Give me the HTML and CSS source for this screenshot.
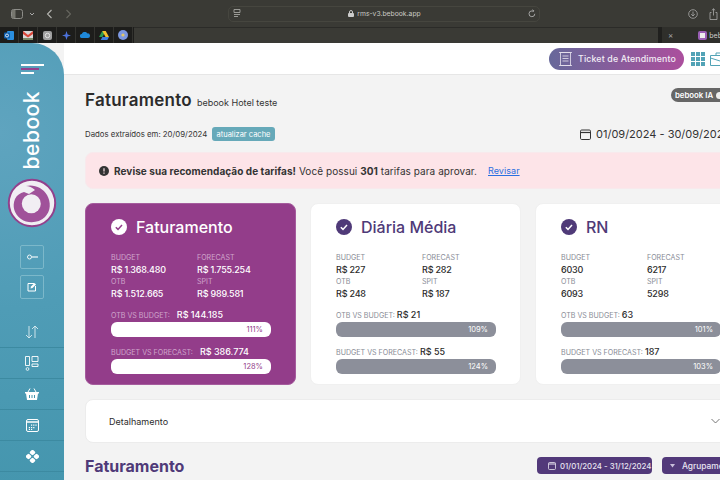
FILE: index.html
```html
<!DOCTYPE html>
<html lang="pt-BR">
  <head>
    <meta charset="UTF-8" />
    <title>bebook RMS</title>
    <link rel="stylesheet" href="styles.css">
  </head>
  <body>
    <!-- browser chrome -->
    <div class="toolbar">
      <div class="toolbar-left">
        <svg class="tool-icon" width="12" height="10" viewBox="0 0 12 10"><rect x=".5" y=".5" width="11" height="9" rx="2" fill="none" stroke="#8d8d88"/><rect x="1" y="1" width="3.5" height="8" fill="#77776f"/></svg>
        <svg width="6" height="4" viewBox="0 0 6 4"><path d="M1 1l2 2 2-2" fill="none" stroke="#aaa" stroke-width="1"/></svg>
        <svg class="nav-back" width="7" height="10" viewBox="0 0 7 10"><path d="M5.5 1L1.5 5l4 4" fill="none" stroke="#b5b5b0" stroke-width="1.1"/></svg>
        <svg class="nav-forward" width="7" height="10" viewBox="0 0 7 10"><path d="M1.5 1l4 4-4 4" fill="none" stroke="#66665f" stroke-width="1.1"/></svg>
      </div>
      <div class="address">
        <svg class="address-list" width="8" height="9" viewBox="0 0 8 9"><path d="M1 .5h6v3H1zM1 5.500h6M1 7.500h4" fill="none" stroke="#a5a5a0" stroke-width=".9"/></svg>
        <div class="address-url">
          <svg width="6" height="7" viewBox="0 0 6 7"><rect y="3" width="6" height="4" rx="1" fill="#ccc"/><path d="M1.500 3V2a1.500 1.500 0 013 0v1" fill="none" stroke="#ccc"/></svg>
          <span>rms-v3.bebook.app</span>
        </div>
        <svg class="address-reload" width="8" height="9" viewBox="0 0 8 9"><path d="M6.800 4.800A2.900 2.900 0 114 1.900h1.500M4.600.6l1.200 1.300-1.200 1.200" fill="none" stroke="#bbb" stroke-width=".8"/></svg>
      </div>
      <div class="toolbar-right">
        <svg width="10" height="10" viewBox="0 0 10 10"><circle cx="5" cy="5" r="4.300" fill="none" stroke="#aaa" stroke-width=".8"/><path d="M5 2.500v4.500M3.200 5.200L5 7l1.800-1.800" fill="none" stroke="#aaa" stroke-width=".8"/></svg>
        <svg width="9" height="12" viewBox="0 0 9 12"><path d="M2.500 4.500H1v7h7v-7H6.500M4.500 7.500V.8M2.800 2.400L4.500.8l1.700 1.600" fill="none" stroke="#aaa" stroke-width=".8"/></svg>
      </div>
    </div>
    <div class="tabs">
      <div class="pinned">
        <span class="pin">
          <svg width="10" height="9" viewBox="0 0 10 9"><rect x="3" width="7" height="9" rx="1" fill="#2a8fe0"/><rect y="1.500" width="6" height="6" rx="1" fill="#0f5fae"/><circle cx="3" cy="4.500" r="1.500" fill="none" stroke="#fff" stroke-width=".8"/></svg>
        </span>
        <span class="pin">
          <svg width="10" height="9" viewBox="0 0 10 9"><rect width="10" height="9" fill="#d8d8d8"/><path d="M0 0l5 4 5-4v3L5 6.500 0 3z" fill="#d9483b"/><path d="M0 7h10v2H0z" fill="#7a8b6a"/></svg>
        </span>
        <span class="pin">
          <svg width="9" height="9" viewBox="0 0 9 9"><rect width="9" height="9" rx="2" fill="#a0a0a0"/><circle cx="4.500" cy="4.500" r="2.200" fill="none" stroke="#e5e5e5" stroke-width="1"/></svg>
        </span>
        <span class="pin">
          <svg width="9" height="9" viewBox="0 0 9 9"><path d="M4.500 0L5.600 3.400 9 4.500 5.600 5.600 4.500 9 3.400 5.600 0 4.500 3.400 3.400z" fill="#4d73dc"/></svg>
        </span>
        <span class="pin">
          <svg width="10" height="6" viewBox="0 0 10 6"><path d="M2 6a2 2 0 01-.2-4A3 3 0 017.300 1.400 2.300 2.300 0 018 6z" fill="#1f88d8"/></svg>
        </span>
        <span class="pin">
          <svg width="10" height="9" viewBox="0 0 10 9"><path d="M3.300 0h3.400L3.400 6H0z" fill="#2a9d50"/><path d="M3.300 0h3.400L10 6H6.600z" fill="#f3c02e"/><path d="M1.700 9L3.400 6H10L8.300 9z" fill="#3d7ee0"/></svg>
        </span>
        <span class="pin">
          <svg width="10" height="10" viewBox="0 0 10 10"><circle cx="5" cy="5" r="5" fill="#7d98e0"/><circle cx="5" cy="5" r="1.600" fill="#e3c765"/></svg>
        </span>
      </div>
      <div class="tab-empty"></div>
      <div class="tab-active">
        <span class="tab-close">×</span>
        <i class="fav-bebook"></i>
        <span class="tab-name">beb</span>
      </div>
    </div>

    <div class="app">
      <!-- sidebar -->
      <aside class="sidebar">
        <div class="burger"><i></i><i class="burger-mid"></i><i class="burger-short"></i></div>
        <div class="brand">bebook</div>
        <svg class="brand-mark" width="50" height="50" viewBox="0 0 50 50">
          <circle cx="25" cy="25" r="23.200" fill="#f1eef3" stroke="#93408c" stroke-width="2"/>
          <path d="M19 8C27 6 36 10 40 17 44 24 44 33 38 39 32 45 21 46 14 41 7 36 5 28 8 21 10 17 13 15 17 14L22 16 28 12C25 9.500 22 8 19 8z" fill="#a0529a"/>
          <circle cx="24.300" cy="25.700" r="9.500" fill="#f1eef3"/>
        </svg>
        <div class="side-btn">
          <svg width="11" height="6" viewBox="0 0 11 6"><circle cx="2.500" cy="3" r="2" fill="none" stroke="#fff" stroke-width=".9"/><path d="M5 3h6" stroke="#fff" stroke-width="1.100"/></svg>
        </div>
        <div class="side-btn">
          <svg width="10" height="10" viewBox="0 0 10 10"><path d="M7 1.500H1v7.500h7.500V4" fill="none" stroke="#fff" stroke-width="1"/><path d="M3.500 6.500L4 4.500 7.500 1l1.500 1.500L5.500 6z" fill="#fff"/></svg>
        </div>
        <nav class="side-nav">
          <a class="side-link">
            <svg width="14" height="14" viewBox="0 0 14 14"><path d="M4 1v12M1 10l3 3 3-3M10 13V1M7 4l3-3 3 3" fill="none" stroke="#dcecf0" stroke-width=".9"/></svg>
          </a>
          <a class="side-link">
            <svg width="14" height="15" viewBox="0 0 14 15"><path d="M.5.5h4v9h-4zM7 .5h6v5H7zM7 8h6v2.500H7z" fill="none" stroke="#fff" stroke-width=".9"/><circle cx="2.500" cy="13" r="1.400" fill="none" stroke="#fff" stroke-width=".8"/></svg>
          </a>
          <a class="side-link">
            <svg width="14" height="12" viewBox="0 0 14 12"><path d="M0 4h14v1.500H13L12 12H2L1 5.500H0z" fill="#fff"/><path d="M3 4l2-3.500M11 4L9 .5" stroke="#fff"/><path d="M4.500 7v3M7 7v3M9.500 7v3" stroke="#4596ae" stroke-width="1"/></svg>
          </a>
          <a class="side-link">
            <svg width="13" height="13" viewBox="0 0 13 13"><rect x=".5" y=".5" width="12" height="12" rx="1.500" fill="none" stroke="#fff"/><path d="M.5 3h12" stroke="#fff" stroke-width="1.500"/><path d="M5 5.500h1.200v1.200H5zM7.200 5.500h1.200v1.200H7.200zM9.400 5.500h1.200v1.200H9.400zM2.800 8h1.200v1.200H2.800zM5 8h1.200v1.200H5zM7.200 8h1.200v1.200H7.200zM2.800 10h1.200v1H2.800zM5 10h1.200v1H5z" fill="#fff"/></svg>
          </a>
          <a class="side-link">
            <svg width="13" height="13" viewBox="0 0 13 13"><g fill="#fff"><rect x="4.200" y=".2" width="4.600" height="4.600" rx="1.300" transform="rotate(45 6.500 2.500)"/><rect x="4.200" y="8.200" width="4.600" height="4.600" rx="1.300" transform="rotate(45 6.500 10.500)"/><rect x=".2" y="4.200" width="4.600" height="4.600" rx="1.300" transform="rotate(45 2.500 6.500)"/><rect x="8.200" y="4.200" width="4.600" height="4.600" rx="1.300" transform="rotate(45 10.500 6.500)"/></g></svg>
          </a>
        </nav>
      </aside>

      <main class="main">
        <header class="topbar">
          <button class="ticket">
            <svg width="13" height="14" viewBox="0 0 13 14"><path d="M1.500.5h10v13h-10zM0 .5h13M0 13.500h13M3.500 4h6M3.500 6.500h6M3.500 9h6" fill="none" stroke="#e9e3ef" stroke-width=".8"/></svg>
            <span>Ticket de Atendimento</span>
          </button>
          <svg class="grid-icon" width="14" height="14" viewBox="0 0 14 14"><g fill="#52a3b6"><rect width="4" height="4"/><rect x="5" width="4" height="4"/><rect x="10" width="4" height="4"/><rect y="5" width="4" height="4"/><rect x="5" y="5" width="4" height="4"/><rect x="10" y="5" width="4" height="4"/><rect y="10" width="4" height="4"/><rect x="5" y="10" width="4" height="4"/><rect x="10" y="10" width="4" height="4"/></g></svg>
          <svg class="case" width="20" height="14" viewBox="0 0 20 14"><path d="M.5 3.500h19v10H.5zM.5 6l9.500 3 9.500-3M6 3.500V1h8v2.500" fill="none" stroke="#52a3b6"/></svg>
        </header>

        <div class="content">
          <span class="ia-badge">bebook IA <i class="ia-dot"></i></span>
          <div class="page-title">
            <h1>Faturamento</h1>
            <span>bebook Hotel teste</span>
          </div>

          <div class="meta-row">
            <span class="meta-text">Dados extraídos em: 20/09/2024</span>
            <button class="cache-btn">atualizar cache</button>
            <span class="date-range">
              <svg width="11" height="11" viewBox="0 0 11 11"><rect x=".5" y="1" width="10" height="9.500" rx="1.200" fill="none" stroke="#333"/><path d="M.5 3.500h10" stroke="#333" stroke-width="1.200"/></svg>
              <span>01/09/2024 - 30/09/2024</span>
            </span>
          </div>

          <div class="alert">
            <svg width="10" height="10" viewBox="0 0 10 10"><circle cx="5" cy="5" r="5" fill="#333"/><path d="M5 2.200v3.200M5 6.600v1.200" stroke="#fde4e8" stroke-width="1.200"/></svg>
            <span class="alert-text"><b>Revise sua recomendação de tarifas!</b> Você possui <b>301</b> tarifas para aprovar.</span>
            <a class="alert-link">Revisar</a>
          </div>

          <section class="cards">
            <article class="card card-main">
              <h2 class="card-title">
                <svg width="16" height="16" viewBox="0 0 16 16"><circle cx="8" cy="8" r="8" fill="#fff"/><path d="M4.800 8.200l2.200 2.200 4-4.400" fill="none" stroke="#933d8a" stroke-width="1.500"/></svg>
                Faturamento
              </h2>
              <dl class="stats">
                <div><dt>BUDGET</dt><dd>R$ 1.368.480</dd></div>
                <div><dt>FORECAST</dt><dd>R$ 1.755.254</dd></div>
                <div><dt>OTB</dt><dd>R$ 1.512.665</dd></div>
                <div><dt>SPIT</dt><dd>R$ 989.581</dd></div>
              </dl>
              <p class="cmp"><span>OTB VS BUDGET:</span> <b class="cmp-gap">R$ 144.185</b></p>
              <div class="bar">111%</div>
              <p class="cmp"><span>BUDGET VS FORECAST:</span> <b class="cmp-gap">R$ 386.774</b></p>
              <div class="bar">128%</div>
            </article>

            <article class="card">
              <h2 class="card-title">
                <svg width="16" height="16" viewBox="0 0 16 16"><circle cx="8" cy="8" r="8" fill="#4f3a78"/><path d="M4.800 8.200l2.200 2.200 4-4.400" fill="none" stroke="#fff" stroke-width="1.500"/></svg>
                Diária Média
              </h2>
              <dl class="stats">
                <div><dt>BUDGET</dt><dd>R$ 227</dd></div>
                <div><dt>FORECAST</dt><dd>R$ 282</dd></div>
                <div><dt>OTB</dt><dd>R$ 248</dd></div>
                <div><dt>SPIT</dt><dd>R$ 187</dd></div>
              </dl>
              <p class="cmp"><span>OTB VS BUDGET:</span> <b>R$ 21</b></p>
              <div class="bar">109%</div>
              <p class="cmp"><span>BUDGET VS FORECAST:</span> <b>R$ 55</b></p>
              <div class="bar">124%</div>
            </article>

            <article class="card">
              <h2 class="card-title">
                <svg width="16" height="16" viewBox="0 0 16 16"><circle cx="8" cy="8" r="8" fill="#4f3a78"/><path d="M4.800 8.200l2.200 2.200 4-4.400" fill="none" stroke="#fff" stroke-width="1.500"/></svg>
                RN
              </h2>
              <dl class="stats">
                <div><dt>BUDGET</dt><dd>6030</dd></div>
                <div><dt>FORECAST</dt><dd>6217</dd></div>
                <div><dt>OTB</dt><dd>6093</dd></div>
                <div><dt>SPIT</dt><dd>5298</dd></div>
              </dl>
              <p class="cmp"><span>OTB VS BUDGET:</span> <b>63</b></p>
              <div class="bar">101%</div>
              <p class="cmp"><span>BUDGET VS FORECAST:</span> <b>187</b></p>
              <div class="bar">103%</div>
            </article>
          </section>

          <div class="details">
            <span>Detalhamento</span>
            <svg width="9" height="6" viewBox="0 0 9 6"><path d="M.5 1l4 4 4-4" fill="none" stroke="#666" stroke-width=".9"/></svg>
          </div>

          <div class="section-head">
            <h2>Faturamento</h2>
            <button class="chip chip-date">
              <svg width="8" height="8" viewBox="0 0 8 8"><rect x=".5" y=".5" width="7" height="7" rx="1" fill="none" stroke="#e8e4f0" stroke-width=".8"/><path d="M.5 2h7" stroke="#e8e4f0"/></svg>
              01/01/2024 - 31/12/2024
            </button>
            <button class="chip chip-group">
              <svg width="5" height="4" viewBox="0 0 5 4"><path d="M0 0h5L2.500 3.500z" fill="#c9bfdb"/></svg>
              Agrupamento
            </button>
          </div>
        </div>
      </main>
    </div>
  </body>
</html>
```

FILE: styles.css
```css
/* resets */
* {
  padding: 0;
  margin: 0;
  box-sizing: border-box;
}
html,
body {
  width: 720px;
  height: 480px;
  overflow: hidden;
}
body {
  font-family: "Inter", "Noto Sans", sans-serif;
  background: #f3f3f3;
  color: #2c2c2c;
}
button {
  font-family: inherit;
  border: none;
}

/* browser chrome */
.toolbar {
  height: 27px;
  background: #3a3a35;
  display: flex;
  align-items: center;
}
.toolbar-left {
  width: 228px;
  display: flex;
  align-items: center;
  padding-left: 11px;
  gap: 6px;
}
.nav-back {
  margin-left: 5px;
}
.nav-forward {
  margin-left: 6px;
}
.address {
  width: 312px;
  height: 16px;
  border: 1px solid #46463f;
  border-radius: 5px;
  display: flex;
  align-items: center;
  padding: 0 3px 0 4px;
}
.address-url {
  flex: 1;
  display: flex;
  justify-content: center;
  align-items: center;
  gap: 3px;
  color: #c9c9c4;
  font-size: 6.8px;
}
.toolbar-right {
  flex: 1;
  display: flex;
  align-items: center;
  justify-content: flex-end;
  gap: 11px;
  padding-right: 2px;
}

.tabs {
  height: 16px;
  background: #2b2b28;
  display: flex;
}
.pinned {
  width: 134px;
  display: flex;
  background: #1d1d1b;
}
.pin {
  width: 19px;
  display: flex;
  align-items: center;
  justify-content: center;
  border-right: 1px solid #33332f;
}
.tab-empty {
  flex: 1;
  background: #3a3a35;
  margin: 1px 0 0;
}
.tab-active {
  width: 62px;
  background: #2f2f2b;
  display: flex;
  align-items: center;
  color: #aaa;
  font-size: 7px;
  padding-left: 6px;
  border-left: 4px solid #20201e;
}
.tab-close {
  font-size: 8px;
  margin-right: 25px;
}
.fav-bebook {
  display: block;
  flex: none;
  width: 9px;
  height: 9px;
  border-radius: 2px;
  border: 2px solid #9a5fb5;
  background: #eee;
  margin-right: 2px;
}
.tab-name {
  color: #ccc;
}

/* app shell */
.app {
  display: flex;
  height: 437px;
}
.sidebar {
  flex: none;
  width: 64px;
  background: radial-gradient(circle at 0 90px, #5fa4bf 0, #4f9cb6 50%, #4596ae 100%);
  border-top-right-radius: 32px;
  display: flex;
  flex-direction: column;
  align-items: center;
  padding-top: 21px;
}
.burger {
  width: 23px;
  display: flex;
  flex-direction: column;
  gap: 2px;
}
.burger i {
  display: block;
  height: 2px;
  background: #fff;
}
.burger .burger-mid {
  width: 18px;
  background: #93408c;
}
.burger .burger-short {
  width: 13px;
}
.brand {
  writing-mode: vertical-rl;
  transform: rotate(180deg);
  color: #fff;
  font-size: 21px;
  font-weight: 500;
  line-height: 26px;
  margin-top: 17px;
  letter-spacing: 0.5px;
}
.brand-mark {
  flex: none;
  margin-top: 9px;
}
.side-btn {
  flex: none;
  width: 24px;
  height: 24px;
  border: 1px solid #7cb8ca;
  border-radius: 2px;
  display: flex;
  align-items: center;
  justify-content: center;
  margin-top: 6px;
}
.brand-mark + .side-btn {
  margin-top: 17px;
}
.side-nav {
  width: 100%;
  margin-top: 18px;
}
.side-link {
  height: 31px;
  display: flex;
  align-items: center;
  justify-content: center;
  border-bottom: 1px solid #3c8aa1;
}

.main {
  flex: 1;
  min-width: 0;
  overflow: hidden;
  position: relative;
}
.topbar {
  height: 32px;
  background: #fff;
  border-bottom: 1px solid #e6e6e6;
  display: flex;
  align-items: center;
  justify-content: flex-end;
  gap: 5px;
  margin-right: -10px;
}
.ticket {
  width: 135px;
  height: 22px;
  margin-right: 2px;
  border-radius: 11px;
  background: linear-gradient(90deg, #67689a, #ab4f9d);
  color: #f3eef6;
  font-size: 8.8px;
  font-weight: 500;
  letter-spacing: 0.15px;
  display: flex;
  align-items: center;
  gap: 6px;
  padding-left: 10px;
}
.grid-icon,
.case {
  flex: none;
}

/* content */
.content {
  padding: 0 0 0 21px;
  width: 690px;
}
.ia-badge {
  position: absolute;
  left: 607px;
  top: 45px;
  width: 60px;
  height: 14px;
  border-radius: 7px;
  background: #666;
  color: #fff;
  font-size: 7.8px;
  font-weight: 600;
  display: flex;
  align-items: center;
  gap: 3px;
  padding-left: 4px;
}
.ia-dot {
  width: 7px;
  height: 7px;
  border-radius: 50%;
  background: #eee;
}
.page-title {
  display: flex;
  align-items: baseline;
  gap: 5px;
  padding-top: 15px;
  height: 43px;
}
.page-title h1 {
  font-size: 17px;
  font-weight: 600;
  letter-spacing: 0.25px;
  line-height: 20px;
  color: #2b2b2b;
}
.page-title span {
  font-size: 9px;
  color: #333;
}
.meta-row {
  display: flex;
  align-items: center;
  height: 14px;
  margin-top: 9px;
}
.meta-text {
  font-size: 7.8px;
  color: #333;
  width: 127px;
}
.cache-btn {
  width: 63px;
  height: 14px;
  background: #66a9b9;
  color: #fff;
  border-radius: 3px;
  font-size: 7.5px;
}
.date-range {
  margin-left: 305px;
  display: flex;
  align-items: center;
  gap: 5px;
  font-size: 11px;
  white-space: nowrap;
  color: #333;
}
.alert {
  margin-top: 11px;
  height: 37px;
  background: #fde4e8;
  border: 1px solid #f8e9ec;
  border-radius: 8px;
  display: flex;
  align-items: center;
  padding-left: 13px;
  font-size: 10px;
  letter-spacing: 0.06px;
  color: #333;
  white-space: nowrap;
}
.alert-text {
  margin-left: 5px;
  width: 374px;
}
.alert-text b {
  font-weight: 700;
}
.alert-link {
  color: #2a6fe0;
  text-decoration: underline;
  font-size: 9px;
}

/* cards */
.cards {
  display: flex;
  gap: 14px;
  margin-top: 14px;
}
.card {
  flex: none;
  width: 211px;
  height: 182px;
  background: #fff;
  border-radius: 8px;
  padding: 15px 25px 0;
  border: 1px solid #f0f0f0;
}
.card-title {
  display: flex;
  align-items: center;
  gap: 9px;
  font-size: 16px;
  font-weight: 500;
  height: 16px;
  color: #4f3a78;
  white-space: nowrap;
}
.stats {
  display: grid;
  grid-template-columns: 86px 86px;
  margin-top: 17px;
}
.stats dt {
  font-size: 7.1px;
  line-height: 11px;
  color: #888c96;
}
.stats dd {
  font-size: 9px;
  font-weight: 500;
  letter-spacing: -0.2px;
  line-height: 13px;
  color: #2c2c2c;
  white-space: nowrap;
}
.cmp {
  font-size: 7.1px;
  line-height: 12px;
  margin-top: 9px;
  color: #888c96;
  white-space: nowrap;
}
.cmp b {
  font-size: 9px;
  font-weight: 500;
  color: #2c2c2c;
}
.cmp-gap {
  margin-left: 5px;
}
.bar {
  width: 160px;
  height: 15px;
  background: #8c8f9a;
  border-radius: 6px;
  color: #fff;
  font-size: 7.5px;
  line-height: 15px;
  text-align: right;
  padding-right: 8px;
}
.card-main {
  background: #933d8a;
  border-color: #a55c9d;
  color: #fff;
}
.card-main .card-title {
  color: #fff;
}
.card-main .stats dt,
.card-main .cmp {
  color: #cfa4ca;
}
.card-main .stats dd,
.card-main .cmp b {
  color: #fff;
}
.card-main .bar {
  background: #fff;
  color: #933d8a;
}

.details {
  margin-top: 14px;
  height: 44px;
  background: #fff;
  border: 1px solid #ececec;
  border-radius: 8px;
  display: flex;
  align-items: center;
  justify-content: space-between;
  padding: 0 33px 0 23px;
  font-size: 9px;
  color: #2c2c2c;
}
.section-head {
  display: flex;
  align-items: center;
  margin-top: 14px;
  height: 17px;
}
.section-head h2 {
  font-size: 16px;
  font-weight: 700;
  color: #4f3a78;
  width: 452px;
}
.chip {
  flex: none;
  height: 17px;
  background: #52397a;
  color: #e9e5f1;
  border-radius: 4px;
  font-weight: 500;
  display: flex;
  align-items: center;
  white-space: nowrap;
}
.chip svg {
  flex: none;
}
.chip-date {
  width: 115px;
  margin-right: 10px;
  font-size: 7.8px;
  gap: 4px;
  padding-left: 11px;
}
.chip-group {
  width: 90px;
  font-size: 8.4px;
  padding-left: 8px;
  gap: 7px;
}
```
